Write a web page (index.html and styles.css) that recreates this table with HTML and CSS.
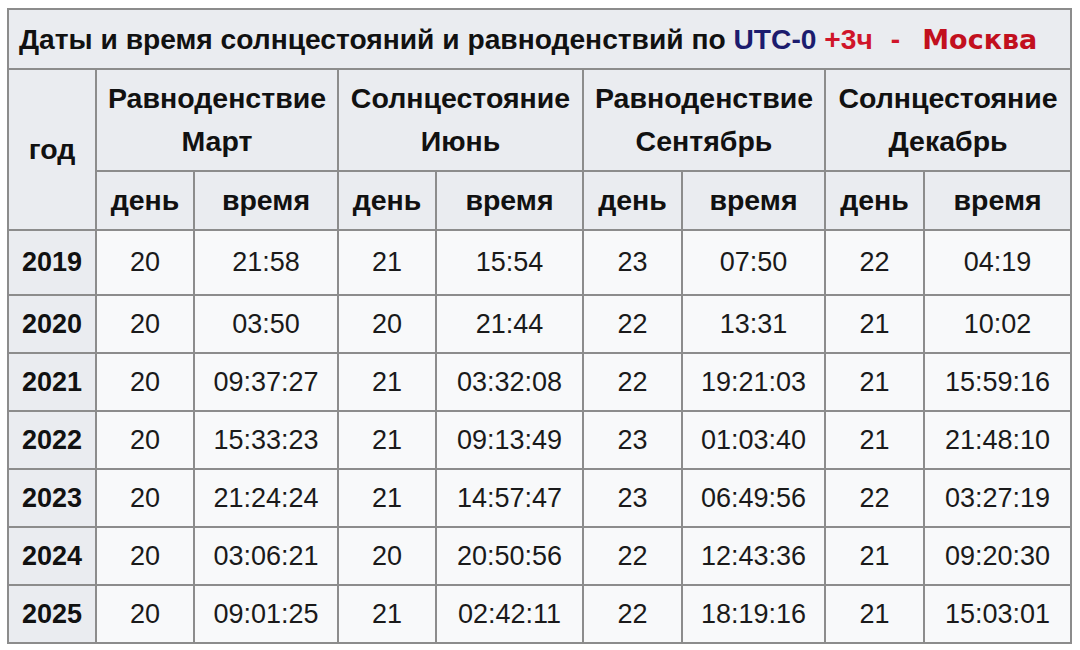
FILE: index.html
```html
<!DOCTYPE html>
<html lang="ru">
<head>
<meta charset="utf-8">
<title>Солнцестояния и равноденствия</title>
<link rel="stylesheet" href="styles.css">
</head>
<body>
<table class="wt">
  <colgroup>
    <col class="c-year">
    <col class="c-day"><col class="c-time">
    <col class="c-day"><col class="c-time2">
    <col class="c-day2"><col class="c-time3">
    <col class="c-day2"><col class="c-time4">
  </colgroup>
  <thead>
    <tr class="r-title">
      <th colspan="9" class="title">Даты и время солнцестояний и равноденствий по <span class="utc">UTC-0</span> <span class="plus">+3ч</span><span class="dash">-</span><span class="msk">Москва</span></th>
    </tr>
    <tr class="r-group">
      <th rowspan="2">год</th>
      <th colspan="2">Равноденствие<br>Март</th>
      <th colspan="2">Солнцестояние<br>Июнь</th>
      <th colspan="2">Равноденствие<br>Сентябрь</th>
      <th colspan="2">Солнцестояние<br>Декабрь</th>
    </tr>
    <tr class="r-sub">
      <th>день</th><th>время</th>
      <th>день</th><th>время</th>
      <th>день</th><th>время</th>
      <th>день</th><th>время</th>
    </tr>
  </thead>
  <tbody>
    <tr class="r-first"><th>2019</th><td>20</td><td>21:58</td><td>21</td><td>15:54</td><td>23</td><td>07:50</td><td>22</td><td>04:19</td></tr>
    <tr><th>2020</th><td>20</td><td>03:50</td><td>20</td><td>21:44</td><td>22</td><td>13:31</td><td>21</td><td>10:02</td></tr>
    <tr><th>2021</th><td>20</td><td>09:37:27</td><td>21</td><td>03:32:08</td><td>22</td><td>19:21:03</td><td>21</td><td>15:59:16</td></tr>
    <tr><th>2022</th><td>20</td><td>15:33:23</td><td>21</td><td>09:13:49</td><td>23</td><td>01:03:40</td><td>21</td><td>21:48:10</td></tr>
    <tr><th>2023</th><td>20</td><td>21:24:24</td><td>21</td><td>14:57:47</td><td>23</td><td>06:49:56</td><td>22</td><td>03:27:19</td></tr>
    <tr><th>2024</th><td>20</td><td>03:06:21</td><td>20</td><td>20:50:56</td><td>22</td><td>12:43:36</td><td>21</td><td>09:20:30</td></tr>
    <tr><th>2025</th><td>20</td><td>09:01:25</td><td>21</td><td>02:42:11</td><td>22</td><td>18:19:16</td><td>21</td><td>15:03:01</td></tr>
  </tbody>
</table>
</body>
</html>
```
FILE: styles.css
```css
html, body {
  margin: 0;
  padding: 0;
  background: #ffffff;
}

body {
  padding: 8px 0 0 7px;
  font-family: "Liberation Sans", Arial, sans-serif;
  color: #202122;
}

.wt {
  border-collapse: collapse;
  table-layout: fixed;
  width: 1064px;
  border: 2px solid #8c8c8c;
}

.c-year { width: 88px; }
.c-day { width: 98px; }
.c-time { width: 144px; }
.c-time2 { width: 147px; }
.c-day2 { width: 99px; }
.c-time3 { width: 143px; }
.c-time4 { width: 147px; }

.wt th,
.wt td {
  border: 2px solid #8c8c8c;
  padding: 0;
  text-align: center;
  vertical-align: middle;
}

.wt th {
  background: #eaecf0;
  font-weight: bold;
  font-size: 28.5px;
  color: #111111;
}

.wt td {
  background: #f8f9fa;
  font-size: 27px;
  color: #1a1a1a;
}

.wt tbody th {
  font-size: 27px;
}

.r-title { height: 60px; }
.r-group { height: 102px; }
.r-sub { height: 59px; }
.wt tbody tr { height: 58px; }
.wt tbody tr.r-first { height: 65px; }

.r-group th {
  line-height: 43px;
}

.wt th.title {
  text-align: left;
  padding-left: 10px;
  font-size: 28.2px;
  white-space: nowrap;
  background: #eaecf0;
}

.utc { color: #1c1c6e; }
.plus { color: #d0152a; }
.dash {
  color: #d0152a;
  padding: 0 22px 0 18px;
}
.msk {
  color: #c2101e;
  font-family: "DejaVu Sans", sans-serif;
  font-weight: bold;
  font-size: 27px;
}
```
